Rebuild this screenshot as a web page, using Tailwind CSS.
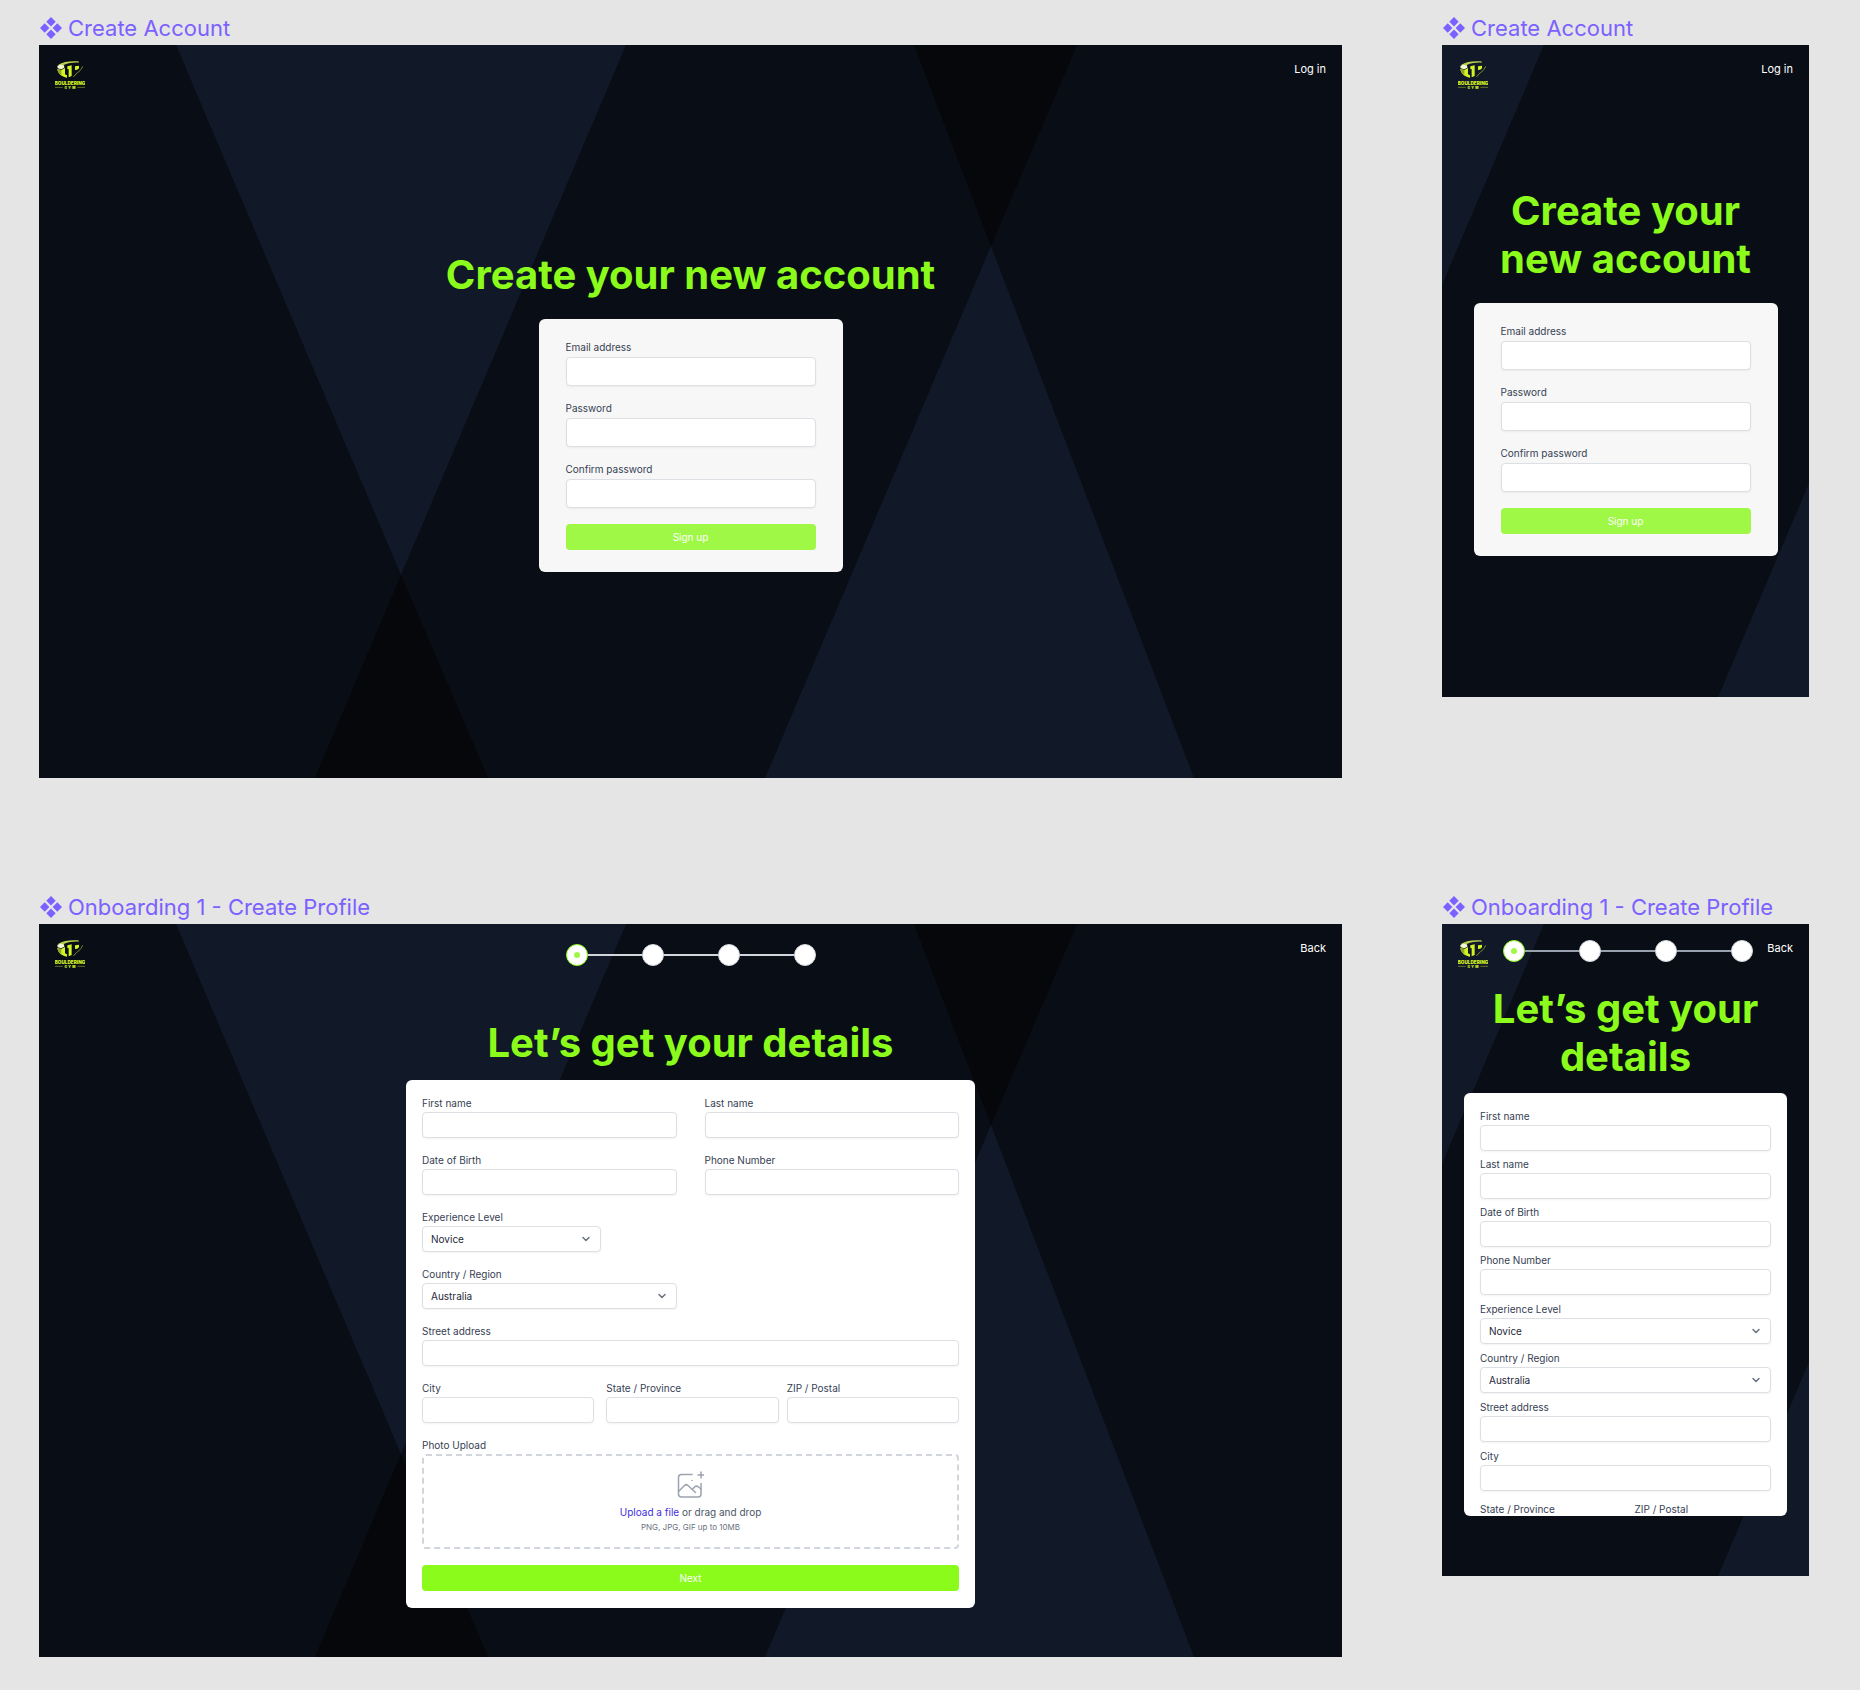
<!DOCTYPE html>
<html lang="en">
<head>
<meta charset="utf-8">
<meta name="viewport" content="width=device-width, initial-scale=1">
<title>TP Bouldering Gym - Onboarding screens</title>
<script src="https://cdn.jsdelivr.net/npm/@tailwindcss/browser@4"></script>
</head>
<body class="bg-[#e5e5e5] font-['Inter',sans-serif] text-gray-700">

<!-- Shared symbols -->
<svg class="hidden" aria-hidden="true">
  <symbol id="component" viewBox="0 0 22 22">
    <path fill="#7b61ff" d="M11 0l4.700 4.700L11 9.400 6.300 4.700zM4.700 6.300L9.400 11l-4.700 4.700L0 11zM17.300 6.300L22 11l-4.700 4.700L12.600 11zM11 12.600l4.700 4.700L11 22l-4.700-4.700z"/>
  </symbol>
  <symbol id="logo" viewBox="0 0 90 84">
    <path fill="#b9cf4d" d="M10 11C24 2 46-1 70 1l2 4c-16-1-30 1-46 7L12 16z"/>
    <path fill="#f3f8cf" d="M7 15l8-4 12 2 1 7-9 5-11-3z"/>
    <path fill="#d2f223" d="M7 24l12 3 11-6v19l6 3v7C19 47 9 38 7 24z"/>
    <path fill="#8ea32e" d="M7 24l12 3v15C12 37 8 32 7 24z"/>
    <path fill="#d2f223" d="M37 16l13-3v32l-9 4V24l-4 1z"/>
    <path fill="#d2f223" d="M60 16l12-2v8l-5 4-7 1z"/>
    <path fill="none" stroke="#8ea32e" stroke-width="2.500" d="M83 16c-4 9-7 11-12 17-3 3-5 1-8 6-2 4-4 6-8 8"/>
    <text x="45" y="71" text-anchor="middle" font-family="Inter, sans-serif" font-weight="900" font-size="14" fill="#d2f223">BOULDERING</text>
    <text x="47" y="83" text-anchor="middle" font-family="Inter, sans-serif" font-weight="900" font-size="10" letter-spacing="4" fill="#d2f223">GYM</text>
    <path stroke="#8ea32e" stroke-width="2" d="M0 79h23M67 79h23"/>
  </symbol>
  <symbol id="wide-bg" viewBox="0 0 1303 733" preserveAspectRatio="none">
    <path fill="#111827" d="M137 0H587L362 530zM726 733H1155L952 201z"/>
    <path fill="#06070b" d="M875 0h163L952 201zM276 733H449L362 530z"/>
  </symbol>
  <symbol id="phone-bg" viewBox="0 0 367 652" preserveAspectRatio="none">
    <path fill="#111827" d="M0 0H102L0 240zM276 652H367V438z"/>
  </symbol>
  <symbol id="chevron" viewBox="0 0 10 10">
    <path fill="none" stroke="#6b7280" stroke-width="1.500" stroke-linecap="round" stroke-linejoin="round" d="M2 3.500l3 3 3-3"/>
  </symbol>
</svg>

<main class="grid grid-cols-[1303fr_367fr] gap-x-[100px] gap-y-[101px] pr-[51px] pb-[33px] pl-[39px]">

  <!-- Create account, desktop -->
  <section>
    <h2 class="flex h-[45px] items-center gap-[6px] pt-[11px] pl-px text-[22px] leading-6 text-[#7b61ff]"><svg class="size-[22px]" aria-hidden="true"><use href="#component"/></svg>Create Account</h2>
    <div class="relative grid min-h-[733px] bg-[#090d15]">
      <svg class="absolute inset-0 size-full" aria-hidden="true"><use href="#wide-bg"/></svg>
      <header class="relative col-start-1 row-start-1 flex items-start justify-between self-start p-4">
        <svg class="h-7 w-[30px]" role="img" aria-label="TP Bouldering Gym"><use href="#logo"/></svg>
        <a href="#" class="text-[11px] leading-4 text-white">Log in</a>
      </header>
      <div class="relative col-start-1 row-start-1 flex flex-col items-center gap-5 place-self-center pb-px">
        <h1 class="text-center text-[40px] leading-12 font-bold text-[#8bfb1c]">Create your new account</h1>
        <form class="flex w-[304px] flex-col gap-4 rounded-md bg-[#f7f7f7] px-[27px] py-[22px]">
          <div class="flex flex-col gap-1">
            <label for="d-email" class="text-[10px] leading-3">Email address</label>
            <input id="d-email" type="email" class="h-[29px] rounded border border-[#dcdfe4] bg-white px-2 text-[10px] shadow-xs">
          </div>
          <div class="flex flex-col gap-1">
            <label for="d-pass" class="text-[10px] leading-3">Password</label>
            <input id="d-pass" type="password" class="h-[29px] rounded border border-[#dcdfe4] bg-white px-2 text-[10px] shadow-xs">
          </div>
          <div class="flex flex-col gap-1">
            <label for="d-confirm" class="text-[10px] leading-3">Confirm password</label>
            <input id="d-confirm" type="password" class="h-[29px] rounded border border-[#dcdfe4] bg-white px-2 text-[10px] shadow-xs">
          </div>
          <button type="button" class="h-[26px] rounded bg-[#9ff845] text-[10px] leading-3 text-white">Sign up</button>
        </form>
      </div>
    </div>
  </section>

  <!-- Create account, phone -->
  <section>
    <h2 class="flex h-[45px] items-center gap-[6px] pt-[11px] pl-px text-[22px] leading-6 text-[#7b61ff]"><svg class="size-[22px]" aria-hidden="true"><use href="#component"/></svg>Create Account</h2>
    <div class="relative grid min-h-[652px] bg-[#090d15]">
      <svg class="absolute inset-0 size-full" aria-hidden="true"><use href="#phone-bg"/></svg>
      <header class="relative col-start-1 row-start-1 flex items-start justify-between self-start p-4">
        <svg class="h-7 w-[30px]" role="img" aria-label="TP Bouldering Gym"><use href="#logo"/></svg>
        <a href="#" class="text-[11px] leading-4 text-white">Log in</a>
      </header>
      <div class="relative col-start-1 row-start-1 flex flex-col items-center gap-5 place-self-center">
        <h1 class="text-center text-[40px] leading-12 font-bold text-[#8bfb1c]">Create your<br>new account</h1>
        <form class="flex w-[304px] flex-col gap-4 rounded-md bg-[#f7f7f7] px-[27px] py-[22px]">
          <div class="flex flex-col gap-1">
            <label for="m-email" class="text-[10px] leading-3">Email address</label>
            <input id="m-email" type="email" class="h-[29px] rounded border border-[#dcdfe4] bg-white px-2 text-[10px] shadow-xs">
          </div>
          <div class="flex flex-col gap-1">
            <label for="m-pass" class="text-[10px] leading-3">Password</label>
            <input id="m-pass" type="password" class="h-[29px] rounded border border-[#dcdfe4] bg-white px-2 text-[10px] shadow-xs">
          </div>
          <div class="flex flex-col gap-1">
            <label for="m-confirm" class="text-[10px] leading-3">Confirm password</label>
            <input id="m-confirm" type="password" class="h-[29px] rounded border border-[#dcdfe4] bg-white px-2 text-[10px] shadow-xs">
          </div>
          <button type="button" class="h-[26px] rounded bg-[#9ff845] text-[10px] leading-3 text-white">Sign up</button>
        </form>
      </div>
    </div>
  </section>

  <!-- Create profile, desktop -->
  <section>
    <h2 class="flex h-[45px] items-center gap-[6px] pt-[11px] pl-px text-[22px] leading-6 text-[#7b61ff]"><svg class="size-[22px]" aria-hidden="true"><use href="#component"/></svg>Onboarding 1 - Create Profile</h2>
    <div class="relative min-h-[733px] bg-[#090d15]">
      <svg class="absolute inset-0 size-full" aria-hidden="true"><use href="#wide-bg"/></svg>
      <header class="relative grid grid-cols-[1fr_auto_1fr] items-start p-4">
        <svg class="h-7 w-[30px]" role="img" aria-label="TP Bouldering Gym"><use href="#logo"/></svg>
        <ol class="flex items-center pt-1" aria-label="Progress">
          <li class="flex size-[22px] items-center justify-center rounded-full border border-[#8bfb1c] bg-white"><span class="size-[6px] rounded-full bg-[#9ff845]"></span></li>
          <li class="h-[2px] w-[54px] bg-gray-300" aria-hidden="true"></li>
          <li class="size-[22px] rounded-full border border-gray-300 bg-white"></li>
          <li class="h-[2px] w-[54px] bg-gray-300" aria-hidden="true"></li>
          <li class="size-[22px] rounded-full border border-gray-300 bg-white"></li>
          <li class="h-[2px] w-[54px] bg-gray-300" aria-hidden="true"></li>
          <li class="size-[22px] rounded-full border border-gray-300 bg-white"></li>
        </ol>
        <a href="#" class="justify-self-end text-[11px] leading-4 text-white">Back</a>
      </header>
      <div class="relative flex flex-col items-center gap-[13px] pt-[35px] pb-12">
        <h1 class="text-center text-[40px] leading-12 font-bold text-[#8bfb1c]">Let’s get your details</h1>
        <form class="flex w-[569px] flex-col gap-4 rounded-md bg-white px-4 py-[17px]">
          <div class="grid grid-cols-2 gap-x-7 gap-y-4">
            <div class="flex flex-col gap-[3px]">
              <label for="d-first" class="text-[10px] leading-3">First name</label>
              <input id="d-first" type="text" class="h-[26px] rounded border border-[#dcdfe4] bg-white px-2 text-[10px] shadow-xs">
            </div>
            <div class="flex flex-col gap-[3px]">
              <label for="d-last" class="text-[10px] leading-3">Last name</label>
              <input id="d-last" type="text" class="h-[26px] rounded border border-[#dcdfe4] bg-white px-2 text-[10px] shadow-xs">
            </div>
            <div class="flex flex-col gap-[3px]">
              <label for="d-dob" class="text-[10px] leading-3">Date of Birth</label>
              <input id="d-dob" type="text" class="h-[26px] rounded border border-[#dcdfe4] bg-white px-2 text-[10px] shadow-xs">
            </div>
            <div class="flex flex-col gap-[3px]">
              <label for="d-phone" class="text-[10px] leading-3">Phone Number</label>
              <input id="d-phone" type="tel" class="h-[26px] rounded border border-[#dcdfe4] bg-white px-2 text-[10px] shadow-xs">
            </div>
          </div>
          <div class="flex w-1/3 flex-col gap-[3px]">
            <label for="d-level" class="text-[10px] leading-3">Experience Level</label>
            <div class="relative flex">
              <select id="d-level" class="h-[26px] w-full appearance-none rounded border border-[#dcdfe4] bg-white px-2 text-[10px] leading-3 text-gray-800 shadow-xs"><option>Novice</option></select>
              <svg class="pointer-events-none absolute top-2 right-[10px] size-[10px]" aria-hidden="true"><use href="#chevron"/></svg>
            </div>
          </div>
          <div class="grid grid-cols-2 gap-x-7">
            <div class="flex flex-col gap-[3px]">
              <label for="d-country" class="text-[10px] leading-3">Country / Region</label>
              <div class="relative flex">
                <select id="d-country" class="h-[26px] w-full appearance-none rounded border border-[#dcdfe4] bg-white px-2 text-[10px] leading-3 text-gray-800 shadow-xs"><option>Australia</option></select>
                <svg class="pointer-events-none absolute top-2 right-[10px] size-[10px]" aria-hidden="true"><use href="#chevron"/></svg>
              </div>
            </div>
          </div>
          <div class="flex flex-col gap-[3px]">
            <label for="d-street" class="text-[10px] leading-3">Street address</label>
            <input id="d-street" type="text" class="h-[26px] rounded border border-[#dcdfe4] bg-white px-2 text-[10px] shadow-xs">
          </div>
          <div class="flex gap-2">
            <div class="mr-1 flex min-w-0 flex-1 flex-col gap-[3px]">
              <label for="d-city" class="text-[10px] leading-3">City</label>
              <input id="d-city" type="text" class="h-[26px] rounded border border-[#dcdfe4] bg-white px-2 text-[10px] shadow-xs">
            </div>
            <div class="flex min-w-0 flex-1 flex-col gap-[3px]">
              <label for="d-state" class="text-[10px] leading-3">State / Province</label>
              <input id="d-state" type="text" class="h-[26px] rounded border border-[#dcdfe4] bg-white px-2 text-[10px] shadow-xs">
            </div>
            <div class="flex min-w-0 flex-1 flex-col gap-[3px]">
              <label for="d-zip" class="text-[10px] leading-3">ZIP / Postal</label>
              <input id="d-zip" type="text" class="h-[26px] rounded border border-[#dcdfe4] bg-white px-2 text-[10px] shadow-xs">
            </div>
          </div>
          <div class="flex flex-col gap-[3px]">
            <span class="text-[10px] leading-3">Photo Upload</span>
            <div class="flex h-[95px] flex-col items-center justify-center rounded border-2 border-dashed border-gray-300">
              <svg class="mb-2 size-[27px]" viewBox="0 0 27 27" fill="none" stroke="#9ca3af" stroke-width="1.500" stroke-linecap="round" stroke-linejoin="round" aria-hidden="true">
                <path d="M15 3.500H4.500a3 3 0 0 0-3 3V23a3 3 0 0 0 3 3H21a3 3 0 0 0 3-3V12.500"/>
                <path d="M1.500 20.500l6-6a2.500 2.500 0 0 1 3.500 0l7.500 7M15.500 18l2-2a3 3 0 0 1 4 0l2.500 2"/>
                <path d="M15 9.500h.01M24 1v6M21 4h6"/>
              </svg>
              <p class="text-[10px] leading-3 text-gray-600"><a href="#" class="text-[#4330e0]">Upload a file</a> or drag and drop</p>
              <p class="mt-[3px] text-[8px] leading-3 text-gray-500">PNG, JPG, GIF up to 10MB</p>
            </div>
          </div>
          <button type="button" class="h-[26px] rounded bg-[#8bfb1c] text-[10px] leading-3 text-white">Next</button>
        </form>
      </div>
    </div>
  </section>

  <!-- Create profile, phone -->
  <section>
    <h2 class="flex h-[45px] items-center gap-[6px] pt-[11px] pl-px text-[22px] leading-6 whitespace-nowrap text-[#7b61ff]"><svg class="size-[22px]" aria-hidden="true"><use href="#component"/></svg>Onboarding 1 - Create Profile</h2>
    <div class="relative min-h-[652px] bg-[#090d15]">
      <svg class="absolute inset-0 size-full" aria-hidden="true"><use href="#phone-bg"/></svg>
      <header class="relative flex items-start justify-between p-4">
        <svg class="h-7 w-[30px]" role="img" aria-label="TP Bouldering Gym"><use href="#logo"/></svg>
        <ol class="flex items-center" aria-label="Progress">
          <li class="flex size-[22px] items-center justify-center rounded-full border border-[#8bfb1c] bg-white"><span class="size-[6px] rounded-full bg-[#9ff845]"></span></li>
          <li class="h-[2px] w-[54px] bg-gray-400" aria-hidden="true"></li>
          <li class="size-[22px] rounded-full border border-gray-300 bg-white"></li>
          <li class="h-[2px] w-[54px] bg-gray-400" aria-hidden="true"></li>
          <li class="size-[22px] rounded-full border border-gray-300 bg-white"></li>
          <li class="h-[2px] w-[54px] bg-gray-400" aria-hidden="true"></li>
          <li class="size-[22px] rounded-full border border-gray-300 bg-white"></li>
        </ol>
        <a href="#" class="text-[11px] leading-4 text-white">Back</a>
      </header>
      <div class="relative flex flex-col gap-3 px-[22px] pt-px">
        <h1 class="text-center text-[40px] leading-12 font-bold text-[#8bfb1c]">Let’s get your<br>details</h1>
        <form class="flex h-[423px] flex-col gap-2 overflow-hidden rounded-md bg-white px-4 pt-[17px]">
          <div class="flex flex-col gap-[7px]">
            <div class="flex flex-col gap-[3px]">
              <label for="m-first" class="text-[10px] leading-3">First name</label>
              <input id="m-first" type="text" class="h-[26px] rounded border border-[#dcdfe4] bg-white px-2 text-[10px] shadow-xs">
            </div>
            <div class="flex flex-col gap-[3px]">
              <label for="m-last" class="text-[10px] leading-3">Last name</label>
              <input id="m-last" type="text" class="h-[26px] rounded border border-[#dcdfe4] bg-white px-2 text-[10px] shadow-xs">
            </div>
            <div class="flex flex-col gap-[3px]">
              <label for="m-dob" class="text-[10px] leading-3">Date of Birth</label>
              <input id="m-dob" type="text" class="h-[26px] rounded border border-[#dcdfe4] bg-white px-2 text-[10px] shadow-xs">
            </div>
            <div class="flex flex-col gap-[3px]">
              <label for="m-phone" class="text-[10px] leading-3">Phone Number</label>
              <input id="m-phone" type="tel" class="h-[26px] rounded border border-[#dcdfe4] bg-white px-2 text-[10px] shadow-xs">
            </div>
          </div>
          <div class="flex flex-col gap-[3px]">
            <label for="m-level" class="text-[10px] leading-3">Experience Level</label>
            <div class="relative flex">
              <select id="m-level" class="h-[26px] w-full appearance-none rounded border border-[#dcdfe4] bg-white px-2 text-[10px] leading-3 text-gray-800 shadow-xs"><option>Novice</option></select>
              <svg class="pointer-events-none absolute top-2 right-[10px] size-[10px]" aria-hidden="true"><use href="#chevron"/></svg>
            </div>
          </div>
          <div class="flex flex-col gap-[3px]">
            <label for="m-country" class="text-[10px] leading-3">Country / Region</label>
            <div class="relative flex">
              <select id="m-country" class="h-[26px] w-full appearance-none rounded border border-[#dcdfe4] bg-white px-2 text-[10px] leading-3 text-gray-800 shadow-xs"><option>Australia</option></select>
              <svg class="pointer-events-none absolute top-2 right-[10px] size-[10px]" aria-hidden="true"><use href="#chevron"/></svg>
            </div>
          </div>
          <div class="flex flex-col gap-[3px]">
            <label for="m-street" class="text-[10px] leading-3">Street address</label>
            <input id="m-street" type="text" class="h-[26px] rounded border border-[#dcdfe4] bg-white px-2 text-[10px] shadow-xs">
          </div>
          <div class="flex flex-col gap-[3px]">
            <label for="m-city" class="text-[10px] leading-3">City</label>
            <input id="m-city" type="text" class="h-[26px] rounded border border-[#dcdfe4] bg-white px-2 text-[10px] shadow-xs">
          </div>
          <div class="grid grid-cols-2 gap-x-[18px] pt-1">
            <div class="flex min-w-0 flex-col gap-[3px]">
              <label for="m-state" class="text-[10px] leading-3">State / Province</label>
              <input id="m-state" type="text" class="h-[26px] rounded border border-[#dcdfe4] bg-white px-2 text-[10px] shadow-xs">
            </div>
            <div class="flex min-w-0 flex-col gap-[3px]">
              <label for="m-zip" class="text-[10px] leading-3">ZIP / Postal</label>
              <input id="m-zip" type="text" class="h-[26px] rounded border border-[#dcdfe4] bg-white px-2 text-[10px] shadow-xs">
            </div>
          </div>
        </form>
      </div>
    </div>
  </section>
</main>
</body>
</html>
